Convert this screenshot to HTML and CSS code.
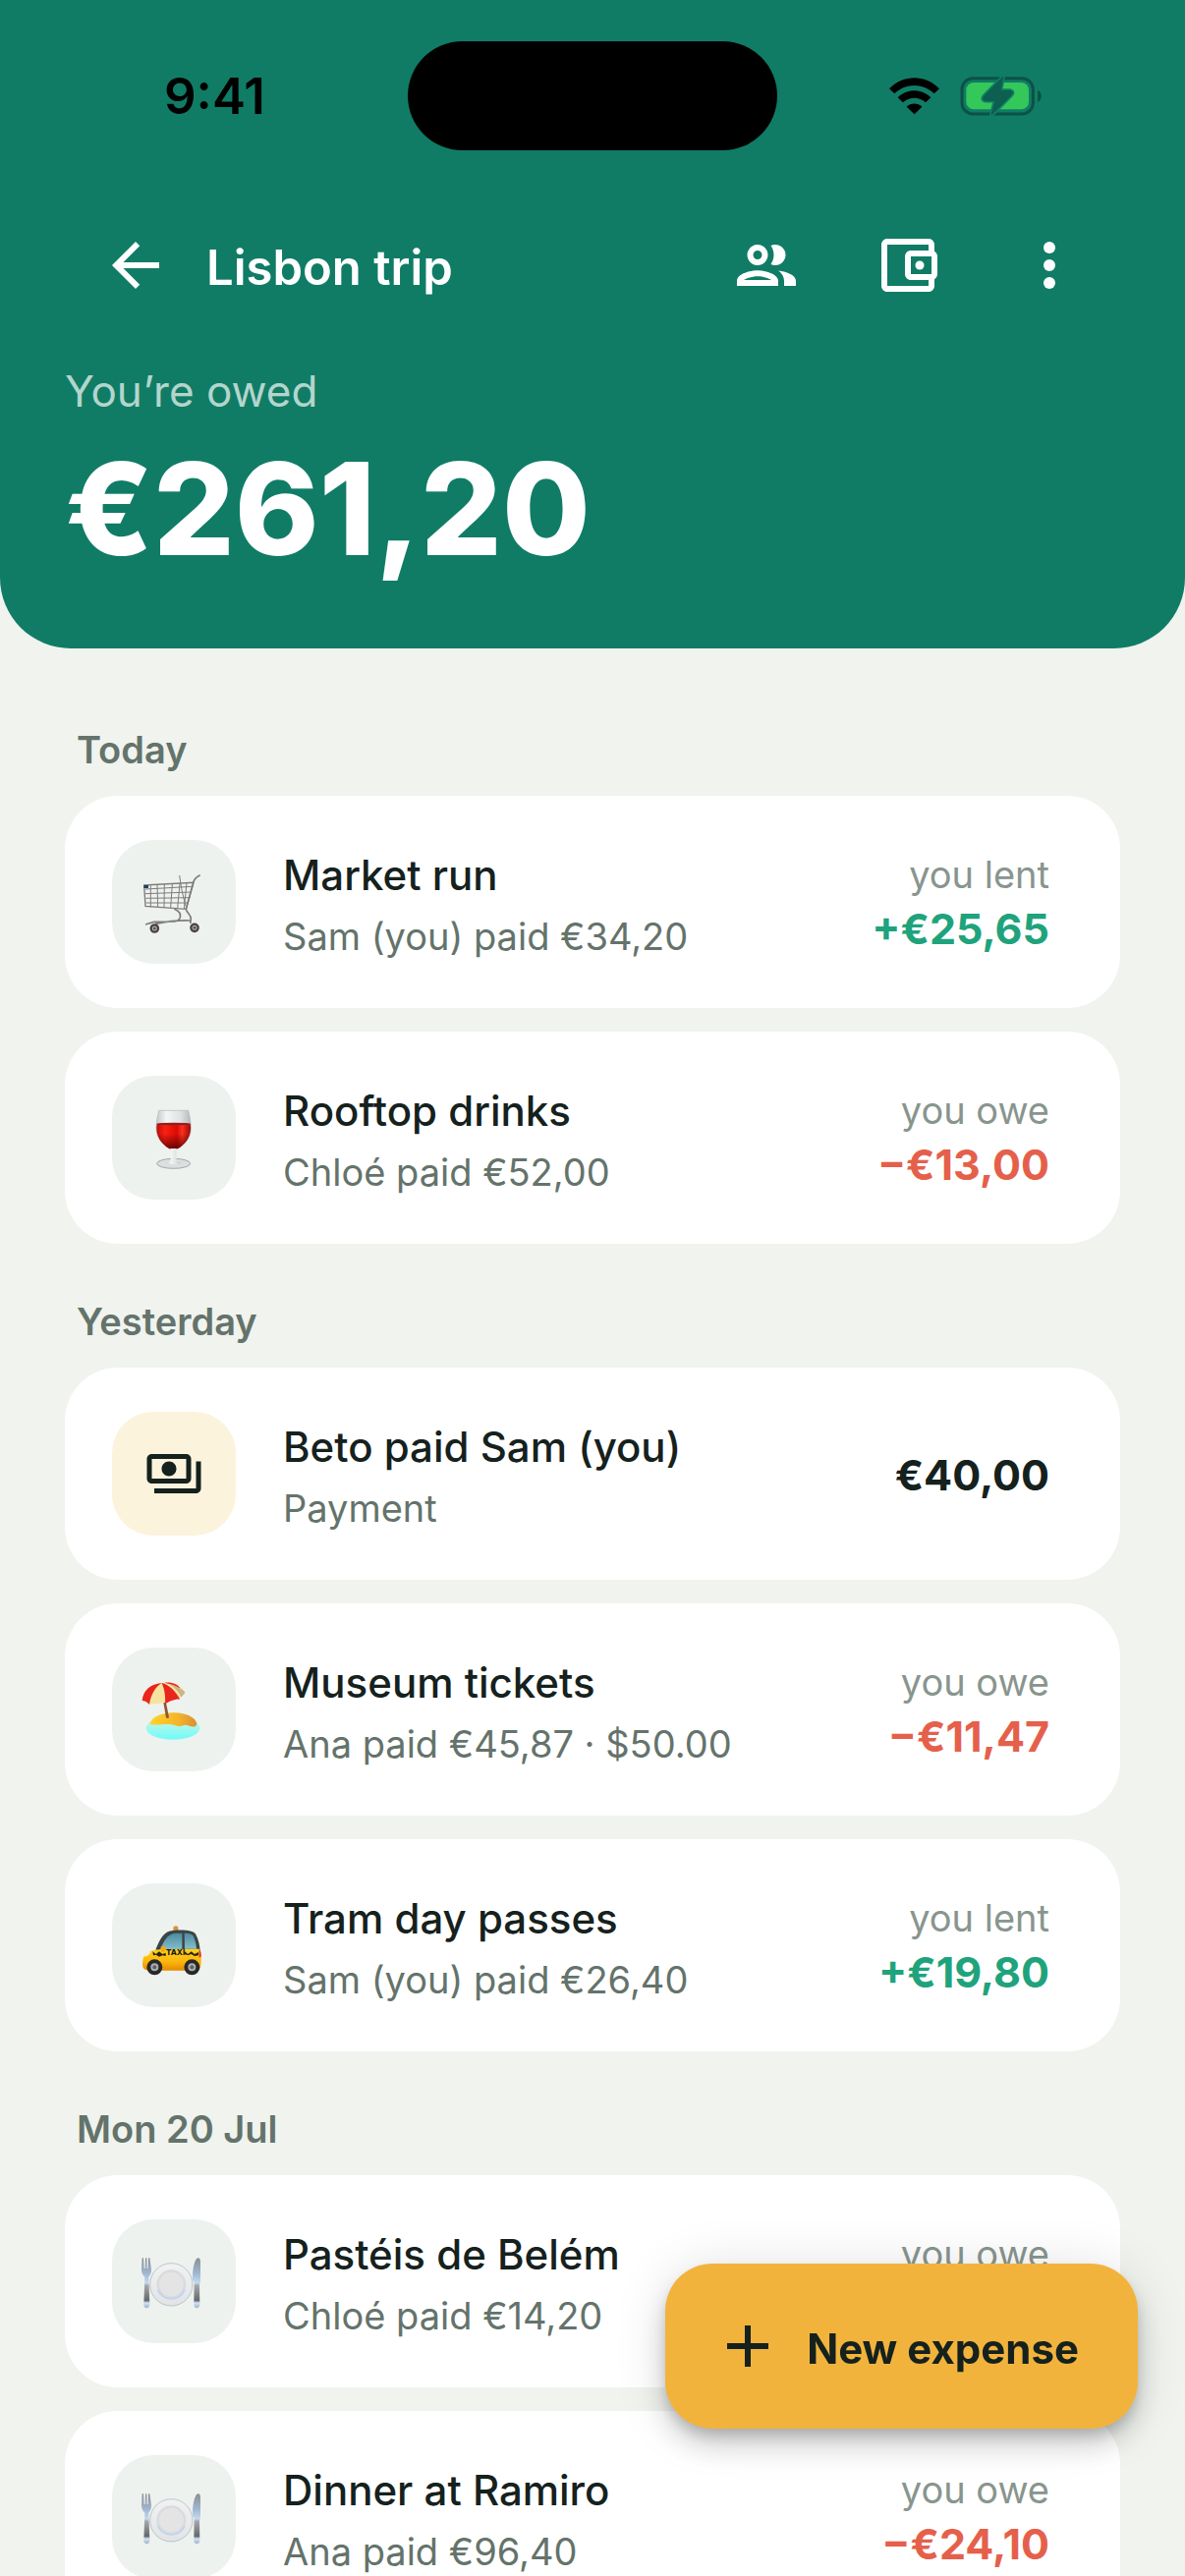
FILE: index.html
```html
<!DOCTYPE html>
<html lang="en">
<head>
<meta charset="utf-8">
<meta name="viewport" content="width=device-width, initial-scale=1">
<title>Lisbon trip</title>
<link rel="stylesheet" href="styles.css">
</head>
<body>
<svg class="defs" aria-hidden="true">
  <defs>
    <linearGradient id="metal" x1="0" y1="0" x2="0" y2="1">
      <stop offset="0" stop-color="#8b8f92"/><stop offset=".3" stop-color="#9fb6cf"/><stop offset=".5" stop-color="#c3d9ef"/><stop offset=".55" stop-color="#a5a7aa"/><stop offset=".85" stop-color="#66696c"/><stop offset=".9" stop-color="#cfe4f8"/><stop offset="1" stop-color="#9fb3c4"/>
    </linearGradient>
    <linearGradient id="plate" x1="0" y1="0" x2="0" y2="1">
      <stop offset="0" stop-color="#f2f2f2"/><stop offset="1" stop-color="#e2e3e5"/>
    </linearGradient>
    <linearGradient id="wine" x1="0" y1="0" x2="1" y2="0">
      <stop offset="0" stop-color="#b80f09"/><stop offset=".25" stop-color="#fb2012"/><stop offset=".6" stop-color="#d80b05"/><stop offset=".75" stop-color="#fb3020"/><stop offset="1" stop-color="#9c0a06"/>
    </linearGradient>
    <linearGradient id="wine-shade" x1="0" y1="0" x2="0" y2="1">
      <stop offset=".4" stop-color="#4a0000" stop-opacity="0"/><stop offset="1" stop-color="#4a0000" stop-opacity=".8"/>
    </linearGradient>
    <linearGradient id="glass" x1="0" y1="0" x2="1" y2="0">
      <stop offset="0" stop-color="#c4c8c9"/><stop offset=".3" stop-color="#f4f5f5"/><stop offset=".7" stop-color="#dfe2e2"/><stop offset="1" stop-color="#b4b8b9"/>
    </linearGradient>
    <linearGradient id="sand" x1="0" y1="0" x2="1" y2="0">
      <stop offset="0" stop-color="#ffd429"/><stop offset=".6" stop-color="#f5b42c"/><stop offset="1" stop-color="#d98f33"/>
    </linearGradient>
    <linearGradient id="sea" x1="0" y1="0" x2="0" y2="1">
      <stop offset="0" stop-color="#d8f2dc"/><stop offset=".5" stop-color="#a0f8ee"/><stop offset="1" stop-color="#6ffbfa"/>
    </linearGradient>
    <linearGradient id="taxi" x1="0" y1="0" x2="0" y2="1">
      <stop offset="0" stop-color="#ffd21c"/><stop offset=".6" stop-color="#fcb50c"/><stop offset="1" stop-color="#e58a00"/>
    </linearGradient>
    <linearGradient id="pane" x1="0" y1="0" x2="0" y2="1">
      <stop offset="0" stop-color="#4b8b9f"/><stop offset="1" stop-color="#86c0cd"/>
    </linearGradient>
    <symbol id="dinner" viewBox="0 0 378 378">
      <path d="M92 118h4l2 32h3l1-32h4l1 32h3l1-32h4l5 34c0 14-4 18-8 24l3 84c0 14-19 14-18 0l3-84c-6-6-10-12-10-24z" fill="url(#metal)"/>
      <path d="M258 120c8-6 12 0 12 10v60c0 4-3 6-3 10l1 60c0 14-19 14-18 0l1-68c-4-4-5-8-5-14 0-24 4-46 12-58z" fill="url(#metal)"/>
      <circle cx="181" cy="199" r="65" fill="url(#plate)" stroke="#9eb0bd" stroke-width="2"/>
      <circle cx="181" cy="199" r="45" fill="#d9dbde"/>
      <path d="M140 216a45 45 0 0 0 82 0" fill="none" stroke="#bcd3f2" stroke-width="5"/>
      <circle cx="181" cy="198" r="37" fill="#e4e4e4"/>
    </symbol>
  </defs>
</svg>

<div class="app">
  <header class="hero">
    <div class="status">
      <time class="status-clock">9:41</time>
      <div class="status-island"></div>
      <div class="status-icons">
        <svg class="wifi" viewBox="0 0 153 114" aria-label="Wi-Fi">
          <path d="M0 34C42-10 111-10 153 34L137 49C103 16 50 16 16 49Z"/>
          <path d="M26 61C54 33 99 33 127 61L111 76C91 58 62 58 42 76Z"/>
          <path d="M53 89C66 76 87 76 100 89L77 112Z"/>
        </svg>
        <svg class="battery" viewBox="232 80 252 126" aria-label="Battery charging">
          <rect x="238" y="88" width="217" height="109" rx="34" fill="none" stroke="#0b5245" stroke-width="9"/>
          <path d="M469 124c15 6 15 31 0 37z" fill="#0b5245"/>
          <rect x="251" y="101" width="191" height="82" rx="23" fill="#34c759"/>
          <path d="M363 84L306 143Q298 154 310 156H340L328 200L389 138Q396 128 384 126H355Z" fill="#107c66" stroke="#107c66" stroke-width="13" stroke-linejoin="round"/>
          <path d="M363 84L306 143Q298 154 310 156H340L328 200L389 138Q396 128 384 126H355Z" fill="#0d5f4f" stroke="#0d5f4f" stroke-width="3" stroke-linejoin="round"/>
        </svg>
      </div>
    </div>
    <nav class="toolbar">
      <button class="icon-button" aria-label="Back">
        <svg class="icon" viewBox="0 0 24 24"><path d="M20 11H7.83l5.59-5.59L12 4l-8 8 8 8 1.41-1.41L7.83 13H20v-2z"/></svg>
      </button>
      <h1 class="toolbar-title">Lisbon trip</h1>
      <button class="icon-button" aria-label="Members">
        <svg class="icon" viewBox="0 0 24 24"><path d="M9 13.75c-2.34 0-7 1.17-7 3.5V19h14v-1.75c0-2.33-4.66-3.5-7-3.5zM4.34 17c.84-.58 2.87-1.25 4.66-1.25s3.82.67 4.66 1.25H4.34zM9 12c1.93 0 3.5-1.57 3.5-3.5S10.93 5 9 5 5.5 6.57 5.5 8.5 7.07 12 9 12zm0-5c.83 0 1.5.67 1.5 1.5S9.83 10 9 10s-1.5-.67-1.5-1.5S8.17 7 9 7zm7.04 6.81c1.16.84 1.96 1.96 1.96 3.44V19h4v-1.75c0-2.02-3.5-3.17-5.96-3.44zM15 12c1.93 0 3.5-1.57 3.5-3.5S16.93 5 15 5c-.54 0-1.04.13-1.5.35.63.89 1 1.98 1 3.15s-.37 2.26-1 3.15c.46.22.96.35 1.5.35z"/></svg>
      </button>
      <button class="icon-button" aria-label="Balances">
        <svg class="icon" viewBox="0 0 24 24"><path d="M21 7.28V5c0-1.1-.9-2-2-2H5c-1.11 0-2 .9-2 2v14c0 1.1.89 2 2 2h14c1.1 0 2-.9 2-2v-2.28c.59-.35 1-.98 1-1.72V9c0-.74-.41-1.38-1-1.72zM20 9v6h-7V9h7zM5 19V5h14v2h-6c-1.1 0-2 .9-2 2v6c0 1.1.9 2 2 2h6v2H5z"/><circle cx="16" cy="12" r="1.5"/></svg>
      </button>
      <button class="icon-button" aria-label="More">
        <svg class="icon" viewBox="0 0 24 24"><circle cx="12" cy="6" r="2"/><circle cx="12" cy="12" r="2"/><circle cx="12" cy="18" r="2"/></svg>
      </button>
    </nav>
    <p class="balance-label">You’re owed</p>
    <p class="balance">€261,20</p>
  </header>

  <main class="feed">
    <section>
      <h2 class="day">Today</h2>
      <ul class="cards">
        <li class="card">
          <div class="tile">
            <svg viewBox="0 0 378 378" aria-hidden="true">
              <g fill="none" stroke="#7f7c7c" stroke-width="4">
                <path d="M102 150l144-8M102 164l140-5M103 178l136-2M104 192l130 0M118 139v66M138 137l2 69M160 135l-1 72M184 134l-5 74M207 132l-7 77M228 131l-8 79" stroke-width="3"/>
                <path d="M206 108l6 40 12 52" stroke-width="3"/>
                <path d="M98 138l151-8-23 81-124-9z"/>
                <path d="M226 211l23-84q4-12 20-20" stroke-width="5"/>
                <path d="M226 211c2 12 16 16 15 32l-2 12M190 211c20 8 20 18 18 26-4 12-16 12-28 12l-52 1-26 8M132 256q60-12 106-10" stroke-width="5"/>
              </g>
              <rect x="97" y="138" width="14" height="9" rx="1" fill="#1d4263"/>
              <g fill="#b5acac" stroke="#484343" stroke-width="7"><circle cx="130" cy="270" r="11"/><circle cx="252" cy="268" r="11"/></g>
              <g fill="#544d4d"><circle cx="130" cy="270" r="4"/><circle cx="252" cy="268" r="4"/></g>
            </svg>
          </div>
          <div class="info"><h3 class="name">Market run</h3><p class="note">Sam (you) paid €34,20</p></div>
          <div class="share"><span class="share-label">you lent</span><span class="amount lent">+€25,65</span></div>
        </li>
        <li class="card">
          <div class="tile">
            <svg viewBox="0 0 378 378" aria-hidden="true">
              <path d="M143 106h90c5 20 8 38 8 54 0 30-20 50-41 62h-24c-21-12-41-32-41-62 0-16 3-34 8-54z" fill="url(#glass)" stroke="#b3b7b8" stroke-width="2"/>
              <path d="M137 146h102c6 38-14 62-39 77h-24c-25-15-45-39-39-77z" fill="url(#wine)"/>
              <path d="M137 146h102c6 38-14 62-39 77h-24c-25-15-45-39-39-77z" fill="url(#wine-shade)"/>
              <ellipse cx="188" cy="147" rx="51" ry="4" fill="#8f2019"/>
              <ellipse cx="188" cy="268" rx="51" ry="15" fill="#dcdfdf" stroke="#a3a7a8" stroke-width="3"/>
              <path d="M179 222h18v36q6 6 14 8-23 8-46 0 8-2 14-8z" fill="url(#glass)"/>
            </svg>
          </div>
          <div class="info"><h3 class="name">Rooftop drinks</h3><p class="note">Chloé paid €52,00</p></div>
          <div class="share"><span class="share-label">you owe</span><span class="amount owed">−€13,00</span></div>
        </li>
      </ul>
    </section>

    <section>
      <h2 class="day">Yesterday</h2>
      <ul class="cards">
        <li class="card">
          <div class="tile tile-payment">
            <svg class="payment-icon" viewBox="0 0 24 24" aria-hidden="true"><path d="M19 14V6c0-1.1-.9-2-2-2H3c-1.1 0-2 .9-2 2v8c0 1.1.9 2 2 2h14c1.1 0 2-.9 2-2zm-2 0H3V6h14v8zm-7-7c-1.66 0-3 1.34-3 3s1.34 3 3 3 3-1.34 3-3-1.34-3-3-3zm13 0v11c0 1.1-.9 2-2 2H4v-2h17V7h2z"/></svg>
          </div>
          <div class="info"><h3 class="name">Beto paid Sam (you)</h3><p class="note">Payment</p></div>
          <div class="share"><span class="amount">€40,00</span></div>
        </li>
        <li class="card">
          <div class="tile">
            <svg viewBox="0 0 378 378" aria-hidden="true">
              <ellipse cx="186" cy="246" rx="82" ry="35" fill="url(#sea)"/>
              <path d="M116 234c4-26 46-36 76-35 34 1 64 14 67 34-2 10-14 10-24 6-12-6-18 0-28 1-14 0-20-6-34-6-20 0-40 4-57 0z" fill="url(#sand)"/>
              <path d="M157 168l8 0 9 46q-5 4-9 0z" fill="#8f5735"/>
              <path d="M92 162c4-34 26-52 64-54 34-2 60 8 67 30-6 6-14 12-24 19-28 10-56 16-84 16-6-6-14-10-23-11z" fill="#f7e3a0"/>
              <path d="M92 162c4-34 26-50 60-54-20 12-34 36-38 66q-10-12-22-12zM152 108c22 4 44 28 56 50-14-2-34 6-46 15 2-26-2-46-10-65zM160 107c26-2 42 6 48 18-12-8-26-14-48-18z" fill="#e9251d"/>
              <path d="M204 124c10 4 18 10 19 14l-12 14c-6-14-18-32-40-41 12 2 24 6 33 13z" fill="#cbb586"/>
            </svg>
          </div>
          <div class="info"><h3 class="name">Museum tickets</h3><p class="note">Ana paid €45,87 · $50.00</p></div>
          <div class="share"><span class="share-label">you owe</span><span class="amount owed">−€11,47</span></div>
        </li>
        <li class="card">
          <div class="tile">
            <svg viewBox="0 0 378 378" aria-hidden="true">
              <path d="M187 134q8-8 15 0v12h-15z" fill="#d9933a"/>
              <path d="M134 200c14-34 26-54 52-56 26-3 62-2 70 12 8 16 12 32 13 52l-10 12H134z" fill="#3b4446"/>
              <path d="M146 204c12-28 22-48 46-52h22v48z" fill="url(#pane)"/>
              <path d="M221 152c14 0 24 2 28 10 6 14 8 26 9 38h-36z" fill="url(#pane)"/>
              <path d="M96 226c8-16 26-24 52-24l118-2c8 16 8 44 3 58-2 8-12 8-20 8H112c-20 0-22-16-16-40z" fill="url(#taxi)"/>
              <path d="M97 224q8-16 22-16-4 14-22 16z" fill="#f5ede0"/>
              <path d="M266 202q8 8 5 24h-5z" fill="#d12b25"/>
              <path d="M149 193q14-6 15 6l-4 10h-10z" fill="#f3a911"/>
              <path d="M124 208l10 8 10-8 10 8 10-4v10l-10-2-10 4-10-6-8 2zM222 208l10 8 10-8 10 8 12-6v10l-12 2-10-6-10 4-10-4z" fill="#2c2412"/>
              <text x="165" y="219" class="taxi-sign">TAXI</text>
              <g fill="#a9adae" stroke="#292828" stroke-width="12"><circle cx="130" cy="256" r="18"/><circle cx="244" cy="256" r="18"/></g>
              <g fill="#5d6061"><circle cx="130" cy="256" r="6"/><circle cx="244" cy="256" r="6"/></g>
            </svg>
          </div>
          <div class="info"><h3 class="name">Tram day passes</h3><p class="note">Sam (you) paid €26,40</p></div>
          <div class="share"><span class="share-label">you lent</span><span class="amount lent">+€19,80</span></div>
        </li>
      </ul>
    </section>

    <section>
      <h2 class="day">Mon 20 Jul</h2>
      <ul class="cards">
        <li class="card">
          <div class="tile"><svg aria-hidden="true"><use href="#dinner"/></svg></div>
          <div class="info"><h3 class="name">Pastéis de Belém</h3><p class="note">Chloé paid €14,20</p></div>
          <div class="share"><span class="share-label">you owe</span><span class="amount owed"></span></div>
        </li>
        <li class="card">
          <div class="tile"><svg aria-hidden="true"><use href="#dinner"/></svg></div>
          <div class="info"><h3 class="name">Dinner at Ramiro</h3><p class="note">Ana paid €96,40</p></div>
          <div class="share"><span class="share-label">you owe</span><span class="amount owed">−€24,10</span></div>
        </li>
      </ul>
    </section>
  </main>

  <button class="fab">
    <svg class="icon" viewBox="0 0 24 24" aria-hidden="true"><path d="M19 13h-6v6h-2v-6H5v-2h6V5h2v6h6v2z"/></svg>
    <span class="fab-label">New expense</span>
  </button>
</div>
</body>
</html>
```
FILE: styles.css
```css
:root {
  --green: #107c66;
  --page: #f0f3ee;
  --ink: #15211d;
  --muted: #64736b;
  --faint: #88958e;
  --gutter: 66px;
}

* {
  box-sizing: border-box;
  margin: 0;
  padding: 0;
}

body {
  background: var(--page);
  color: var(--ink);
  font-family: Inter, "Open Sans", sans-serif;
}

button {
  border: 0;
  background: none;
  color: inherit;
  font: inherit;
  cursor: pointer;
}

svg {
  display: block;
  fill: currentColor;
}

.defs {
  position: absolute;
  width: 0;
  height: 0;
}

.app {
  display: flex;
  flex-direction: column;
  height: 100vh;
}

/* Header */

.hero {
  flex: none;
  padding: 0 var(--gutter) 64px;
  border-radius: 0 0 72px 72px;
  background: var(--green);
  color: #fff;
}

.status {
  display: grid;
  grid-template-columns: 1fr auto 1fr;
  align-items: center;
  height: 186px;
  padding: 42px 0 33px;
  color: #000;
}

.status-clock {
  padding-left: 101px;
  font-size: 51px;
  font-weight: 600;
}

.status-island {
  width: 376px;
  height: 111px;
  border-radius: 56px;
  background: #000;
}

.status-icons {
  display: flex;
  align-items: center;
  justify-content: flex-end;
  gap: 21px;
  padding-right: 79px;
}

.wifi {
  width: 51px;
  height: 38px;
}

.battery {
  width: 84px;
  height: 42px;
}

.toolbar {
  display: flex;
  align-items: center;
  height: 168px;
}

.toolbar-title {
  flex: 1;
  padding-top: 6px;
  font-size: 49px;
  font-weight: 600;
  line-height: 60px;
}

.icon-button {
  display: grid;
  place-items: center;
  width: 144px;
  height: 144px;
}

.icon {
  width: 72px;
  height: 72px;
}

.balance-label {
  padding-top: 14px;
  color: #b3d5cc;
  font-size: 44px;
  line-height: 60px;
}

.balance {
  padding-top: 12px;
  font-size: 130px;
  font-weight: 800;
  line-height: 156px;
}

/* Expense feed */

.feed {
  flex: 1;
  min-height: 0;
  overflow-y: auto;
  padding: 24px var(--gutter) 0;
  scrollbar-width: none;
}

.day {
  padding: 52px 12px 20px;
  color: var(--muted);
  font-size: 38px;
  font-weight: 600;
  line-height: 54px;
}

.cards {
  display: grid;
  gap: 24px;
  list-style: none;
}

.card {
  display: flex;
  align-items: center;
  gap: 48px;
  min-height: 216px;
  padding: 42px 72px 42px 48px;
  border-radius: 54px;
  background: #fff;
}

.tile {
  display: grid;
  flex: none;
  place-items: center;
  width: 126px;
  height: 126px;
  border-radius: 42px;
  background: #edf2ef;
}

.tile svg {
  width: 126px;
  height: 126px;
}

.tile-payment {
  background: #fcf3dd;
}

.tile .payment-icon {
  width: 60px;
  height: 60px;
}

.taxi-sign {
  fill: #1f1a10;
  font-size: 24px;
  font-weight: 800;
}

.info {
  flex: 1;
  padding-top: 2px;
}

.name {
  font-size: 42px;
  font-weight: 500;
  line-height: 68px;
}

.note {
  color: var(--muted);
  font-size: 38px;
  line-height: 56px;
}

.share {
  display: grid;
  justify-items: end;
  padding-top: 2px;
}

.share-label {
  color: var(--faint);
  font-size: 38px;
  line-height: 52px;
}

.amount {
  min-height: 58px;
  font-size: 43px;
  font-weight: 700;
  line-height: 58px;
}

.lent {
  color: #1fa37c;
}

.owed {
  color: #e5604b;
}

/* Floating action */

.fab {
  position: fixed;
  right: 48px;
  bottom: 150px;
  display: flex;
  align-items: center;
  gap: 24px;
  height: 168px;
  padding: 0 60px 0 48px;
  border-radius: 48px;
  background: #f2b33d;
  box-shadow: 0 9px 15px -3px rgba(0, 0, 0, .2), 0 18px 30px rgba(0, 0, 0, .14), 0 3px 54px rgba(0, 0, 0, .12);
  font-size: 42px;
  font-weight: 700;
}

.fab-label {
  padding-top: 4px;
}
```
